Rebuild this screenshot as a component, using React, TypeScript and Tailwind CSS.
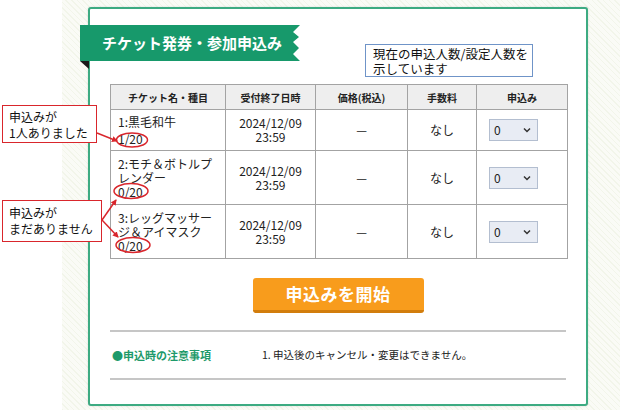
import React from "react";

const jp = { fontFamily: '"Noto Sans CJK JP", "Noto Sans", sans-serif' };

function Select() {
  return (
    <div className="flex h-[22px] w-[49px] items-center justify-between border border-[#b3bed0] bg-[#e8ecf4] pl-[4px] pr-[6px] text-[12px] text-[#222]">
      <span>0</span>
      <svg width="8" height="6" viewBox="0 0 8 6">
        <path d="M1 1.5 L4 4.5 L7 1.5" fill="none" stroke="#333" strokeWidth="1.5" />
      </svg>
    </div>
  );
}

const rows = [
  { name: ["1:黒毛和牛"], count: "1/20", h: "h-[41px]", cp: "pt-[3px]" },
  { name: ["2:モチ＆ボトルプ", "レンダー"], count: "0/20", h: "h-[54px]", cp: "" },
  { name: ["3:レッグマッサー", "ジ＆アイマスク"], count: "0/20", h: "h-[54px]", cp: "" },
];

export default function App() {
  return (
    <div className="relative flex h-[410px] w-[620px] overflow-hidden bg-white text-[#222]" style={jp}>
      <div className="w-[62px] shrink-0 bg-white" />
      <div className="flex-1 bg-[repeating-linear-gradient(45deg,#f2f5ea_0,#f2f5ea_1px,#fafbf6_1px,#fafbf6_4px)] pl-[26px] pt-[7px]">
        <div className="h-[399px] w-[500px] rounded-[3px] border-2 border-[#3dab82] bg-white shadow-[0_0_2px_rgba(0,0,0,0.15)]">
          <div className="px-[20px] pt-[16px]">
            {/* header */}
            <div className="-ml-[30px] flex h-[59px] items-start">
              <div className="relative h-[36px] w-[220px] shrink-0">
                <svg className="absolute left-0 top-0" width="220" height="45" viewBox="0 0 220 45">
                  <polygon
                    points="0,0 220,0 213,7 219,12 213,17 219,23 213,29 220,36 0,36"
                    fill="#17996b"
                  />
                  <polygon points="0,36 9,36 9,44" fill="#1a1a1a" />
                </svg>
                <div className="relative flex h-[36px] items-center pl-[22px] text-[15px] font-bold text-white">
                  チケット発券・参加申込み
                </div>
              </div>
              <div className="ml-[65px] mt-[19px] h-[33px] w-[168px] whitespace-nowrap border border-[#6f94c8] bg-white pl-[7px] pt-[1px] text-[12.5px] leading-[15px] text-[#111]">
                現在の申込人数/設定人数を
                <br />
                示しています
              </div>
            </div>
            {/* table */}
            <table className="w-[457px] table-fixed border-collapse text-[12px]">
              <colgroup>
                <col className="w-[115px]" />
                <col className="w-[90px]" />
                <col className="w-[92px]" />
                <col className="w-[69px]" />
                <col className="w-[91px]" />
              </colgroup>
              <thead>
                <tr className="h-[25px] bg-[#eeeeee] text-[10px] font-bold">
                  <th className="border border-[#a3a3a3] p-0 text-center">チケット名・種目</th>
                  <th className="border border-[#a3a3a3] p-0 text-center">受付終了日時</th>
                  <th className="border border-[#a3a3a3] p-0 text-center">価格(税込)</th>
                  <th className="border border-[#a3a3a3] p-0 text-center">手数料</th>
                  <th className="border border-[#a3a3a3] p-0 text-center">申込み</th>
                </tr>
              </thead>
              <tbody>
                {rows.map((r, i) => (
                  <tr key={i} className={r.h}>
                    <td className="border border-[#a3a3a3] py-0 pl-[7px] pr-0 align-middle leading-[14px] whitespace-nowrap">
                      {r.name.map((n, j) => (
                        <div key={j}>{n}</div>
                      ))}
                      <div className={r.cp}>{r.count}</div>
                    </td>
                    <td className="border border-[#a3a3a3] p-0 text-center align-middle leading-[14px]">
                      2024/12/09
                      <br />
                      23:59
                    </td>
                    <td className="border border-[#a3a3a3] p-0 text-center align-middle">—</td>
                    <td className="border border-[#a3a3a3] p-0 text-center align-middle">なし</td>
                    <td className="border border-[#a3a3a3] py-0 pl-[12px] pr-0 align-middle">
                      <Select />
                    </td>
                  </tr>
                ))}
              </tbody>
            </table>
            {/* button */}
            <div className="mt-[19px] flex justify-center">
              <div className="flex h-[35px] w-[171px] items-center justify-center rounded-[3px] border-b-[3px] border-[#d27d0c] bg-[#f89c1c] text-[17px] font-bold tracking-[0.5px] text-white">
                申込みを開始
              </div>
            </div>
            {/* notice */}
            <div className="mt-[17px] flex h-[50px] items-center border-y-2 border-[#c6c6c6] pl-[2px]">
              <div className="w-[150px] text-[11px] font-bold text-[#1e9a6a]">●申込時の注意事項</div>
              <div className="text-[10.5px] text-[#222]">1. 申込後のキャンセル・変更はできません。</div>
            </div>
          </div>
        </div>
      </div>

      {/* annotations */}
      <div className="absolute left-[2px] top-[105px] h-[38px] w-[95px] border-[1.5px] border-[#d9262c] bg-white pl-[6px] pt-[3px] text-[12px] leading-[16px] text-[#111]">
        申込みが
        <br />
        1人ありました
      </div>
      <div className="absolute left-[2px] top-[200px] h-[42px] w-[100px] border-[1.5px] border-[#d9262c] bg-white pl-[6px] pt-[4px] text-[12px] leading-[16px] text-[#111]">
        申込みが
        <br />
        まだありません
      </div>
      <svg className="pointer-events-none absolute left-0 top-0" width="620" height="410" viewBox="0 0 620 410">
        <defs>
          <marker id="ah" markerWidth="6" markerHeight="6" refX="5" refY="3" orient="auto" markerUnits="userSpaceOnUse">
            <polygon points="0,0 6,3 0,6" fill="#d9262c" />
          </marker>
        </defs>
        <ellipse cx="132" cy="140" rx="15.5" ry="7" fill="none" stroke="#d9262c" strokeWidth="1.5" />
        <ellipse cx="131" cy="191" rx="17" ry="7.5" fill="none" stroke="#d9262c" strokeWidth="1.5" />
        <ellipse cx="133" cy="245" rx="17" ry="7.5" fill="none" stroke="#d9262c" strokeWidth="1.5" />
        <line x1="97" y1="133" x2="117" y2="141" stroke="#d9262c" strokeWidth="1.5" markerEnd="url(#ah)" />
        <line x1="102" y1="220" x2="116" y2="200" stroke="#d9262c" strokeWidth="1.5" markerEnd="url(#ah)" />
        <line x1="102" y1="220" x2="118" y2="237" stroke="#d9262c" strokeWidth="1.5" markerEnd="url(#ah)" />
      </svg>
    </div>
  );
}
